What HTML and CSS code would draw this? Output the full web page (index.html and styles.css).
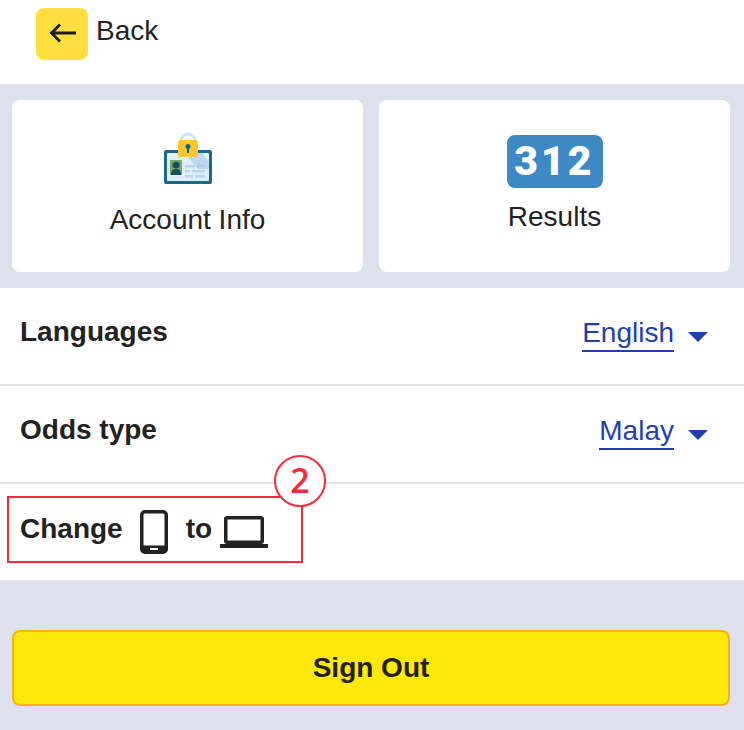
FILE: index.html
```html
<!DOCTYPE html>
<html lang="en">
<head>
	<meta charset="UTF-8">
	<title>Menu</title>
	<link rel="stylesheet" href="styles.css">
</head>
<body>
	<div id="wrap">
		<header class="top">
			<a class="back-btn" href="javascript:;">
				<svg width="27" height="20" viewBox="0 0 27 20">
					<path d="M27 10H2.500M11 1.500L2.500 10l8.500 8.500" fill="none" stroke="#1d1d1b" stroke-width="2.800"/>
				</svg>
			</a>
			<span class="back-text">Back</span>
		</header>

		<section class="cards">
			<a class="card" href="javascript:;">
				<svg class="card-icon" width="48" height="52" viewBox="0 0 48 52">
					<path d="M17 10V9a7 7 0 0 1 14 0v3" fill="none" stroke="#cfe6fa" stroke-width="3"/>
					<rect x="0" y="18" width="48" height="34" rx="2" fill="#176a8c"/>
					<rect x="3" y="21" width="42" height="28" rx="1" fill="#e2effa"/>
					<path d="M20 21h18l7 9v7H34z" fill="#bcd8f2"/>
					<rect x="6" y="28" width="12" height="15" fill="#79ad5e"/>
					<circle cx="12" cy="33" r="3.500" fill="#14506c"/>
					<path d="M7 43c0-5 2-6 5-6s5 1 5 6z" fill="#14506c"/>
					<rect x="21" y="33" width="10" height="2.500" fill="#b5d5f3"/>
					<rect x="33" y="33" width="8" height="2.500" fill="#a9cdef"/>
					<rect x="21" y="38" width="5" height="2.500" fill="#b5d5f3"/>
					<rect x="28" y="38" width="13" height="2.500" fill="#b5d5f3"/>
					<rect x="21" y="43" width="8" height="2.500" fill="#b5d5f3"/>
					<rect x="31" y="43" width="10" height="2.500" fill="#b5d5f3"/>
					<rect x="14" y="8" width="20" height="17" rx="3" fill="#fdc52f"/>
					<circle cx="24" cy="14.500" r="2.500" fill="#14608a"/>
					<rect x="23" y="15" width="2" height="6" fill="#14608a"/>
				</svg>
				<span class="card-label info-label">Account Info</span>
			</a>
			<a class="card" href="javascript:;">
				<span class="count">312</span>
				<span class="card-label results-label">Results</span>
			</a>
		</section>

		<ul class="settings">
			<li>
				<span class="set-name">Languages</span>
				<a class="select" href="javascript:;"><span>English</span><i class="caret"></i></a>
			</li>
			<li>
				<span class="set-name">Odds type</span>
				<a class="select" href="javascript:;"><span>Malay</span><i class="caret"></i></a>
			</li>
			<li class="change">
				<span class="set-name">Change</span>
				<svg class="phone" width="28" height="44" viewBox="0 0 28 44">
					<path fill-rule="evenodd" fill="#222" d="M5 0h18a5 5 0 0 1 5 5v34a5 5 0 0 1-5 5H5a5 5 0 0 1-5-5V5a5 5 0 0 1 5-5zM3.500 5v30.500h21V5a1.500 1.500 0 0 0-1.500-1.500H5A1.500 1.500 0 0 0 3.500 5zM10 38v2h8v-2z"/>
				</svg>
				<span class="set-name">to</span>
				<svg class="laptop" width="48" height="32" viewBox="0 0 48 32">
					<path fill-rule="evenodd" fill="#222" d="M7 0h34a3 3 0 0 1 3 3v22a3 3 0 0 1-3 3H7a3 3 0 0 1-3-3V3a3 3 0 0 1 3-3zM7.500 3.500v21h33v-21zM0 28h48v4H0z"/>
				</svg>
				<div class="mark-box"><span class="mark-num">2</span></div>
			</li>
		</ul>

		<div class="bottom">
			<a class="sign-out" href="javascript:;">Sign Out</a>
		</div>
	</div>
</body>
</html>
```

FILE: styles.css
```css
* {
	box-sizing: border-box;
}
html, body {
	margin: 0;
	padding: 0;
}
body {
	font-family: "Liberation Sans", Arial, sans-serif;
	color: #222;
	background: #dee1eb;
}
a {
	text-decoration: none;
	color: inherit;
}
ul {
	margin: 0;
	padding: 0;
	list-style: none;
}
#wrap {
	width: 744px;
	height: 730px;
	overflow: hidden;
}
.top {
	display: flex;
	height: 84px;
	padding: 8px 0 0 36px;
	background: #fff;
}
.back-btn {
	display: flex;
	align-items: center;
	justify-content: center;
	width: 52px;
	height: 52px;
	background: #ffde40;
	border-radius: 8px;
}
.back-btn svg {
	margin-bottom: 2px;
}
.back-text {
	margin: 6px 0 0 8px;
	font-size: 28px;
	line-height: 34px;
}
.cards {
	display: flex;
	gap: 16px;
	padding: 16px 14px 16px 12px;
}
.card {
	display: flex;
	flex: 1;
	flex-direction: column;
	align-items: center;
	height: 172px;
	padding-top: 32px;
	background: #fff;
	border-radius: 8px;
}
.card-icon {
	display: block;
}
.card-label {
	font-size: 28px;
	line-height: 32px;
}
.info-label {
	margin-top: 20px;
}
.results-label {
	margin-top: 13px;
}
.count {
	width: 96px;
	height: 53px;
	margin-top: 3px;
	background: #3d89c6;
	border-radius: 8px;
	color: #fff;
	font-family: "Roboto", sans-serif;
	font-size: 41px;
	font-weight: 900;
	letter-spacing: 3px;
	line-height: 53px;
	text-align: center;
}
.settings {
	background: #fff;
}
.settings li {
	position: relative;
	display: flex;
	align-items: center;
	justify-content: space-between;
	height: 98px;
	padding: 0 36px 8px 20px;
	border-bottom: 2px solid #e4e4e4;
}
.settings li.change {
	justify-content: flex-start;
	padding-bottom: 6px;
}
.set-name {
	font-size: 28px;
	font-weight: bold;
}
.select {
	display: flex;
	align-items: center;
	color: #1f3fb0;
	font-size: 28px;
}
.select span {
	height: 40px;
	padding-top: 4px;
	line-height: 34px;
	border-bottom: 2px solid #1f3fb0;
}
.caret {
	width: 0;
	height: 0;
	margin: 10px 0 0 14px;
	border-top: 10px solid #1f3fb0;
	border-left: 10px solid transparent;
	border-right: 10px solid transparent;
}
.phone {
	margin: 6px 18px 0 17px;
}
.laptop {
	margin: 6px 0 0 8px;
}
.mark-box {
	position: absolute;
	left: 7px;
	top: 12px;
	width: 296px;
	height: 67px;
	border: 2px solid #f62a3e;
}
.mark-num {
	position: absolute;
	top: -43px;
	right: -25px;
	width: 52px;
	height: 52px;
	background: #fff;
	border: 2px solid #f62a3e;
	border-radius: 50%;
	color: #f62a3e;
	font-family: "Open Sans", sans-serif;
	font-size: 34px;
	font-weight: 600;
	line-height: 46px;
	text-align: center;
}
.bottom {
	padding: 48px 14px 0 12px;
}
.sign-out {
	display: block;
	height: 76px;
	background: #fde70c;
	border: 2px solid #fbb017;
	border-radius: 8px;
	font-size: 28px;
	font-weight: bold;
	line-height: 72px;
	text-align: center;
}
```
